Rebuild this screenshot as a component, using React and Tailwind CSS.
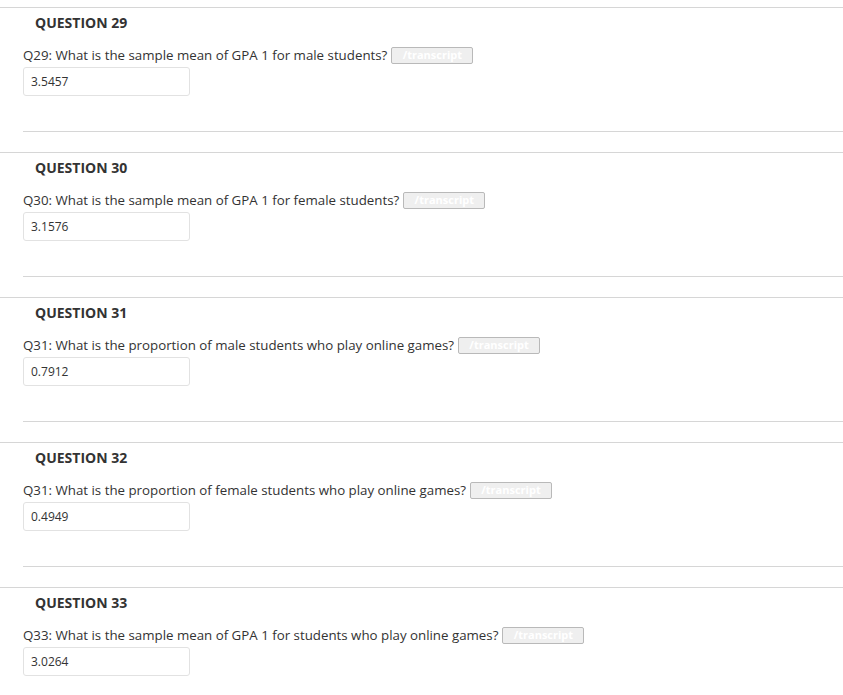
const questions = [
  { num: 29, text: 'Q29: What is the sample mean of GPA 1 for male students?', answer: '3.5457' },
  { num: 30, text: 'Q30: What is the sample mean of GPA 1 for female students?', answer: '3.1576' },
  { num: 31, text: 'Q31: What is the proportion of male students who play online games?', answer: '0.7912' },
  { num: 32, text: 'Q31: What is the proportion of female students who play online games?', answer: '0.4949' },
  { num: 33, text: 'Q33: What is the sample mean of GPA 1 for students who play online games?', answer: '3.0264' },
];

const Question = ({ num, text, answer }) => (
  <div className="h-[145px] border-t border-[#d6d6d6]">
    <h3 className="pl-[35px] pt-[5px] text-[14px] font-bold leading-[19px] text-[#333]">QUESTION {num}</h3>
    <div className="mt-[14px] flex items-center pl-[23px] text-[13.3px] leading-[18px] text-[#333]">
      <span>{text}</span>
      <span className="ml-[4px] flex h-[17px] w-[82px] items-center justify-center rounded-[2px] border border-[#b9b9b9] bg-[#efefef] text-[11px] font-bold text-white">
        /transcript
      </span>
    </div>
    <div className="ml-[23px] mt-[3px] flex h-[29px] w-[167px] items-center rounded-[3px] border border-[#e2e2e2] px-[7px] text-[12px] text-[#333]">
      {answer}
    </div>
    <div className="ml-[23px] mt-[35px] border-t border-[#d6d6d6]" />
  </div>
);

export default function App() {
  return (
    <div className="bg-white pt-[7px]" style={{ fontFamily: '"Open Sans", sans-serif' }}>
      {questions.map((q) => (
        <Question key={q.num} {...q} />
      ))}
    </div>
  );
}
